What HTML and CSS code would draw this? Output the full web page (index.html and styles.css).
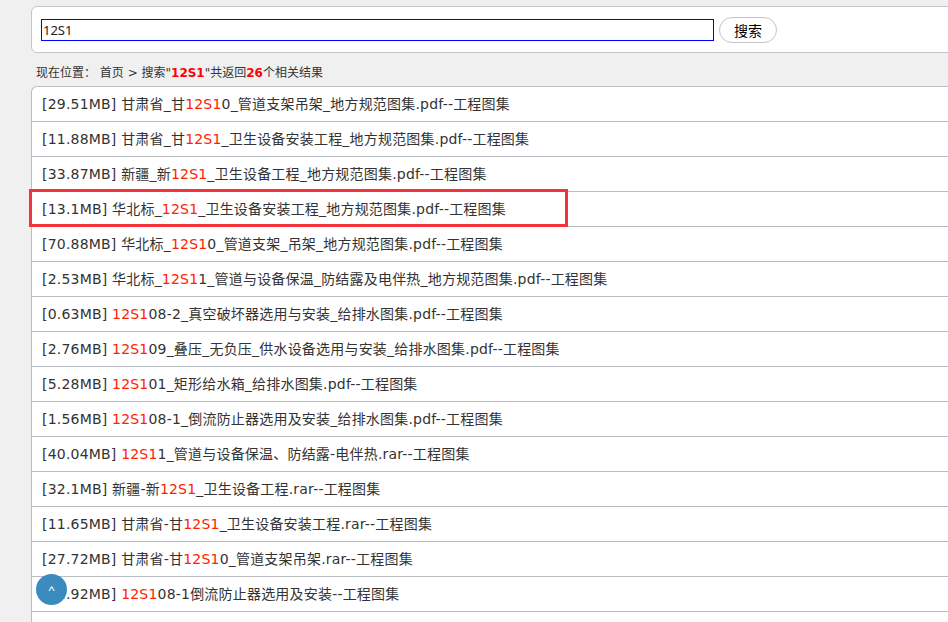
FILE: index.html
```html
<!DOCTYPE html>
<html lang="zh-CN">
<head>
<meta charset="utf-8">
<title>搜索 12S1</title>
<link rel="stylesheet" href="styles.css">
</head>
<body>
<div class="page">
  <form class="search-box">
    <input class="search-input" type="text" value="12S1">
    <button class="search-btn" type="button">搜索</button>
  </form>
  <div class="crumb">现在位置： 首页 &gt; 搜索"<b class="hl">12S1</b>"共返回<b class="hl">26</b>个相关结果</div>
  <ul class="results">
    <li>[29.51MB] 甘肃省_甘<span class="kw">12S1</span>0_管道支架吊架_地方规范图集.pdf--工程图集</li>
    <li>[11.88MB] 甘肃省_甘<span class="kw">12S1</span>_卫生设备安装工程_地方规范图集.pdf--工程图集</li>
    <li>[33.87MB] 新疆_新<span class="kw">12S1</span>_卫生设备工程_地方规范图集.pdf--工程图集</li>
    <li class="marked">[13.1MB] 华北标_<span class="kw">12S1</span>_卫生设备安装工程_地方规范图集.pdf--工程图集<span class="mark-box"></span></li>
    <li>[70.88MB] 华北标_<span class="kw">12S1</span>0_管道支架_吊架_地方规范图集.pdf--工程图集</li>
    <li>[2.53MB] 华北标_<span class="kw">12S1</span>1_管道与设备保温_防结露及电伴热_地方规范图集.pdf--工程图集</li>
    <li>[0.63MB] <span class="kw">12S1</span>08-2_真空破坏器选用与安装_给排水图集.pdf--工程图集</li>
    <li>[2.76MB] <span class="kw">12S1</span>09_叠压_无负压_供水设备选用与安装_给排水图集.pdf--工程图集</li>
    <li>[5.28MB] <span class="kw">12S1</span>01_矩形给水箱_给排水图集.pdf--工程图集</li>
    <li>[1.56MB] <span class="kw">12S1</span>08-1_倒流防止器选用及安装_给排水图集.pdf--工程图集</li>
    <li>[40.04MB] <span class="kw">12S1</span>1_管道与设备保温、防结露-电伴热.rar--工程图集</li>
    <li>[32.1MB] 新疆-新<span class="kw">12S1</span>_卫生设备工程.rar--工程图集</li>
    <li>[11.65MB] 甘肃省-甘<span class="kw">12S1</span>_卫生设备安装工程.rar--工程图集</li>
    <li>[27.72MB] 甘肃省-甘<span class="kw">12S1</span>0_管道支架吊架.rar--工程图集</li>
    <li>[22.92MB] <span class="kw">12S1</span>08-1倒流防止器选用及安装--工程图集</li>
    <li>&nbsp;</li>
  </ul>
</div>
<a class="to-top" href="#">^</a>
</body>
</html>
```
FILE: styles.css
```css
html, body {
  margin: 0;
  padding: 0;
  overflow: hidden;
}
body {
  background: #f0f0f0;
  font-family: "DejaVu Sans", "Noto Sans CJK SC", sans-serif;
  color: #333;
}
.page {
  margin-left: 31px;
  margin-right: -30px;
  padding-top: 6px;
}
.search-box {
  margin: 0;
  display: flex;
  align-items: center;
  gap: 5px;
  height: 45px;
  padding: 0 9px;
  background: #fff;
  border: 1px solid #c2c5c9;
  border-radius: 6px 0 0 6px;
}
.search-input {
  box-sizing: border-box;
  width: 673px;
  height: 22px;
  margin: 0;
  padding: 0 1px;
  border: 1px solid #0000ff;
  font-family: "Noto Sans", "Noto Sans CJK SC", sans-serif;
  font-size: 13px;
  color: #222;
  outline: none;
}
.search-btn {
  box-sizing: border-box;
  width: 58px;
  height: 26px;
  padding: 0;
  background: #fff;
  border: 1px solid #c3c3c3;
  border-radius: 13px;
  font-family: "Noto Sans CJK SC", sans-serif;
  font-size: 14px;
  color: #000;
}
.crumb {
  padding: 12px 0 4px 5px;
  font-size: 12px;
  line-height: 17px;
  color: #333;
}
.hl {
  color: #f00;
}
.results {
  list-style: none;
  margin: 0;
  padding: 0;
  background: #fff;
  border-top: 1px solid #b9bcc0;
  border-left: 1px solid #b9bcc0;
  border-radius: 6px 0 0 0;
}
.results li {
  position: relative;
  height: 34px;
  line-height: 34px;
  padding-left: 10px;
  border-bottom: 1px solid #b9bcc0;
  font-size: 14px;
  letter-spacing: 0.2px;
  color: #333;
  white-space: nowrap;
}
.kw {
  color: #ff2200;
}
.mark-box {
  position: absolute;
  left: -3px;
  top: -3px;
  width: 539px;
  height: 38px;
  box-sizing: border-box;
  border: 3px solid #f5333a;
}
.to-top {
  position: fixed;
  left: 36px;
  bottom: 17px;
  width: 31px;
  height: 31px;
  border-radius: 50%;
  background: #3c8bbf;
  color: #fff;
  text-decoration: none;
  text-align: center;
  font-family: "Liberation Sans", sans-serif;
  font-size: 13px;
  line-height: 34px;
}
```
